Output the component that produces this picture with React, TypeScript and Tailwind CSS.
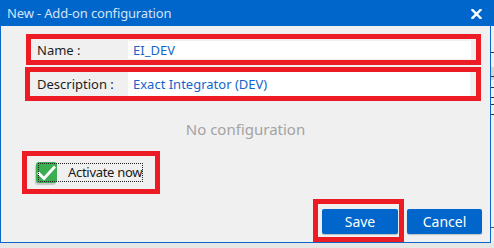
import React from "react";

export default function App() {
  const font = { fontFamily: '"Noto Sans", "Open Sans", Arial, sans-serif' };
  return (
    <div className="w-[494px] h-[248px] bg-[#e9e9e9] overflow-hidden flex flex-col" style={font}>
      <div className="flex h-[243px]">
        {/* Dialog */}
        <div className="w-[491px] h-[243px] flex flex-col">
          {/* Title bar */}
          <div className="h-[26px] bg-[#0066cc] flex items-center justify-between pl-[7px] pr-[9px] shrink-0">
            <span className="text-[13px] text-[#d3e3f6] leading-none tracking-[-0.15px]">New - Add-on configuration</span>
            <svg width="11" height="10" viewBox="0 0 11 10" className="mt-[1px]">
              <path d="M1.5 1 L9.5 9 M9.5 1 L1.5 9" stroke="#ffffff" strokeWidth="2.4" strokeLinecap="square" />
            </svg>
          </div>
          {/* Body */}
          <div className="flex-1 bg-[#f0f0f0] border-l border-r border-b border-[#0a66cc] flex flex-col">
            {/* Name */}
            <div className="mt-[8px] ml-[25px] w-[455px] h-[31px] border-[5px] border-[#ed1c24] flex pt-[2px] pb-[1px] pr-[5px]">
              <div className="w-[97px] flex items-center pl-[6px] text-[13px] text-[#1e1e1e] leading-none">Name :</div>
              <div className="flex-1 bg-white flex items-center pl-[5px] text-[13px] text-[#1565c8] leading-none">EI_DEV</div>
            </div>
            {/* Description */}
            <div className="mt-[2px] ml-[24px] w-[456px] h-[34px] border-[5px] border-[#ed1c24] flex pr-[6px]">
              <div className="w-[98px] flex items-center pl-[7px] text-[13px] text-[#1e1e1e] leading-none">Description :</div>
              <div className="flex-1 bg-white flex items-center pl-[5px] text-[13px] text-[#1565c8] leading-none">Exact Integrator (DEV)</div>
            </div>
            {/* No configuration */}
            <div className="h-[50px] flex items-center justify-center pt-[6px] text-[15px] text-[#a3a3a3] leading-none">
              No configuration
            </div>
            {/* Activate now */}
            <div className="ml-[21px] w-[138px] h-[43px] border-[5px] border-[#ed1c24] flex items-center pl-[9px]">
              <div className="relative flex items-center">
                <div className="w-[21px] h-[21px] rounded-[3px] bg-[#3cae52] flex items-center justify-center shadow-[-1px_2px_1px_rgba(0,0,0,0.18)]">
                  <svg width="19" height="16" viewBox="0 0 19 16">
                    <path d="M2 8.5 L7 13.5 L17 2.5" stroke="#ffffff" strokeWidth="2.8" fill="none" strokeLinecap="square" />
                  </svg>
                </div>
                <span className="ml-[11px] text-[13px] text-[#1a1a1a] leading-none tracking-[-0.3px]">Activate now</span>
                <div className="absolute left-[2px] top-[1px] w-[105px] h-[19px] border border-dotted border-[#222]" />
              </div>
            </div>
            {/* Buttons */}
            <div className="mt-[5px] h-[43px] flex justify-end pr-[8px]">
              <div className="w-[91px] h-[43px] border-[5px] border-[#ed1c24] pl-[4px] pt-[5px]">
                <button className="w-[76px] h-[25px] rounded-[2px] bg-[#0066cc] text-white text-[14px] leading-none flex items-center justify-center shadow-[0_1px_1px_rgba(0,0,0,0.2)]">
                  Save
                </button>
              </div>
              <button className="ml-[3px] mt-[10px] w-[75px] h-[25px] rounded-[2px] bg-[#0066cc] text-white text-[14px] leading-none flex items-center justify-center shadow-[0_1px_1px_rgba(0,0,0,0.2)]">
                Cancel
              </button>
            </div>
          </div>
        </div>
        {/* Underlying window sliver */}
        <div className="w-[3px] h-[243px] bg-[#f0f0f0] flex flex-col">
          <div className="h-[26px] bg-[#0066cc]" />
          <div className="mt-[26px] h-[1px] bg-[#333]" />
          <div className="mt-[14px] h-[13px] bg-[#d4d4d4]" />
          <div className="mt-[-4px] h-[1px] bg-[#333]" />
          <div className="mt-[10px] h-[1px] bg-[#333]" />
          <div className="mt-[9px] h-[1px] bg-[#333]" />
          <div className="mt-[6px] h-[1px] bg-[#333]" />
          <div className="mt-[9px] h-[1px] bg-[#333]" />
          <div className="mt-[112px] h-[1px] bg-[#555]" />
        </div>
      </div>
      <div className="flex-1 bg-[#e6e6e6]" />
    </div>
  );
}
